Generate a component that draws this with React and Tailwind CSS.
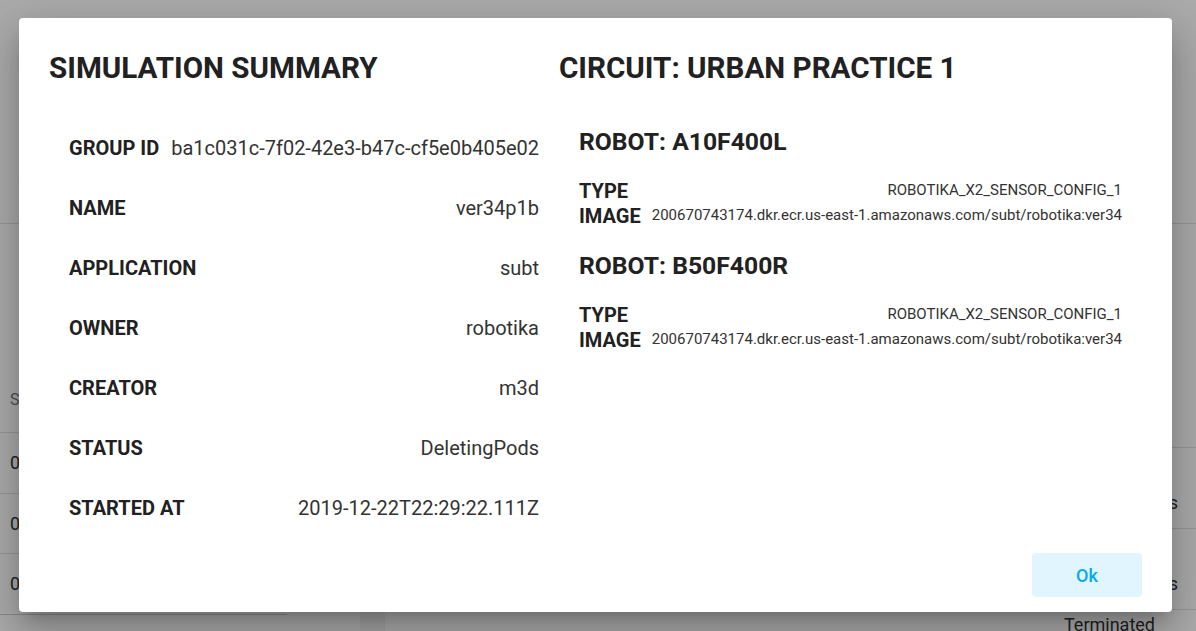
import React from 'react';

const summary = [
  ['GROUP ID', 'ba1c031c-7f02-42e3-b47c-cf5e0b405e02'],
  ['NAME', 'ver34p1b'],
  ['APPLICATION', 'subt'],
  ['OWNER', 'robotika'],
  ['CREATOR', 'm3d'],
  ['STATUS', 'DeletingPods'],
  ['STARTED AT', '2019-12-22T22:29:22.111Z'],
];

const robots = [
  {
    name: 'A10F400L',
    type: 'ROBOTIKA_X2_SENSOR_CONFIG_1',
    image: '200670743174.dkr.ecr.us-east-1.amazonaws.com/subt/robotika:ver34',
  },
  {
    name: 'B50F400R',
    type: 'ROBOTIKA_X2_SENSOR_CONFIG_1',
    image: '200670743174.dkr.ecr.us-east-1.amazonaws.com/subt/robotika:ver34',
  },
];

function BackgroundPage() {
  return (
    <div className="w-[1196px] h-[631px] bg-[#f5f5f5] overflow-hidden text-[#333]">
      {/* top area */}
      <div className="h-[224px] bg-white border-b border-[#e0e0e0] flex items-end pb-[30px] px-[18px] justify-between">
        <span className="text-[18px]">I</span>
        <span className="text-[18px] pr-[20px]">.</span>
      </div>
      <div className="flex gap-[25px]">
        {/* left table */}
        <div className="w-[360px] bg-white h-[407px] flex flex-col">
          <div className="h-[208px] shrink-0 flex items-end pb-[20px] px-[10px] text-[16px] text-[#777]">S</div>
          {[0, 1, 2].map((i) => (
            <div key={i} className="h-[60.5px] shrink-0 border-t border-[#e0e0e0] flex items-center px-[10px] text-[18px]">0</div>
          ))}
          <div className="border-t border-[#cfcfcf] w-[287px] shrink-0" />
        </div>
        {/* right table */}
        <div className="flex-1 bg-white h-[407px] flex flex-col">
          <div className="h-[223px] shrink-0" />
          {['s', 's'].map((t, i) => (
            <div key={i} className="h-[81px] shrink-0 border-t border-[#e0e0e0] flex items-start pt-[41px] justify-end pr-[18px] text-[18px] leading-[27px]">{t}</div>
          ))}
          <div className="border-t border-[#e0e0e0] shrink-0 flex justify-end pr-[41px] pt-[1px] text-[18px] leading-[27px]">Terminated</div>
        </div>
      </div>
    </div>
  );
}

function App() {
  return (
    <div className="relative w-[1196px] h-[631px] overflow-hidden" style={{ fontFamily: 'Roboto, "Liberation Sans", sans-serif' }}>
      <BackgroundPage />

      {/* overlay + dialog */}
      <div className="absolute inset-0 bg-black/[0.33] pl-[19px] pt-[18px]">
        <div className="w-[1153px] h-[594px] bg-white rounded-[4px] shadow-[0_11px_15px_-7px_rgba(0,0,0,0.2),0_24px_38px_3px_rgba(0,0,0,0.14),0_9px_46px_8px_rgba(0,0,0,0.12)] pt-[32px] px-[30px] pb-[15px] flex flex-col text-[#212121]">
          <div className="flex flex-1">
            {/* left column */}
            <div className="w-[510px]">
              <h2 className="text-[29.6px] leading-[36px] font-bold">SIMULATION SUMMARY</h2>
              <div className="mt-[32px] px-[20px]">
                {summary.map(([label, value]) => (
                  <div key={label} className="h-[60px] flex items-center justify-between gap-[12px]">
                    <span className="text-[20px] font-bold">{label}</span>
                    <span className="text-[20px] text-[#333]">{value}</span>
                  </div>
                ))}
              </div>
            </div>

            {/* right column */}
            <div className="flex-1">
              <h2 className="text-[29.6px] leading-[36px] font-bold">CIRCUIT: URBAN PRACTICE 1</h2>
              <div className="mt-[42px] px-[20px]">
                {robots.map((r, i) => (
                  <div key={r.name} className={i > 0 ? 'mt-[24px]' : ''}>
                    <h3 className="text-[24.7px] leading-[28px] font-bold">ROBOT: {r.name}</h3>
                    <div className="mt-[22px]">
                      <div className="h-[25px] flex items-center justify-between">
                        <span className="text-[20px] font-bold">TYPE</span>
                        <span className="text-[15px] text-[#333]">{r.type}</span>
                      </div>
                      <div className="h-[25px] flex items-center justify-between">
                        <span className="text-[20px] font-bold">IMAGE</span>
                        <span className="text-[15px] text-[#333]">{r.image}</span>
                      </div>
                    </div>
                  </div>
                ))}
              </div>
            </div>
          </div>

          <div className="flex justify-end">
            <button className="w-[110px] h-[44px] rounded-[4px] bg-[#e1f5fe] text-[#03a9f4] text-[18px] font-medium">Ok</button>
          </div>
        </div>
      </div>
    </div>
  );
}

export default App;
